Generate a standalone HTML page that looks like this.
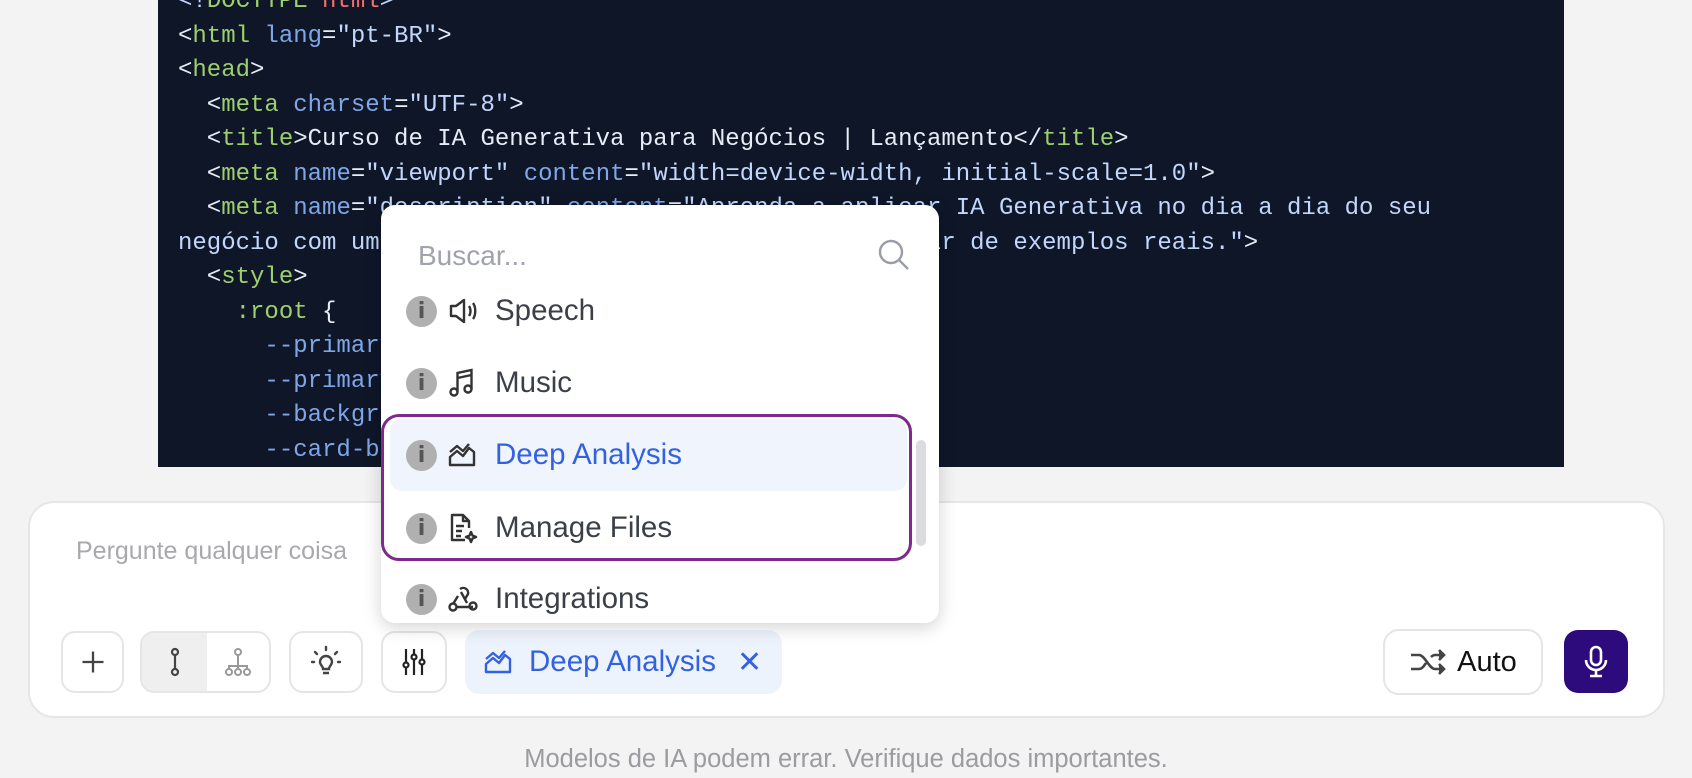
<!DOCTYPE html>
<html><head><meta charset="utf-8"><style>
*{margin:0;padding:0;box-sizing:border-box}
body{width:1692px;height:778px;background:#f3f3f3;position:relative;overflow:hidden;font-family:"Liberation Sans",sans-serif}
.code{position:absolute;left:158px;top:0;width:1406px;height:467px;background:#0e1628;overflow:hidden}
.code pre{position:absolute;left:20px;top:-15px;font-family:"Liberation Mono",monospace;font-size:24px;line-height:34.5px;color:#e6edf7;letter-spacing:0px}
.t{color:#9ecf6e}.a{color:#7fa7e8}.s{color:#c3d6fb}.r{color:#f26d6d}
.input{position:absolute;left:28px;top:501px;width:1637px;height:217px;background:#fff;border:2px solid #e6e6e6;border-radius:26px}
.ph{position:absolute;left:76px;top:537px;font-size:25px;color:#a8a8ad}
.btn{position:absolute;background:#fff;border:2px solid #e5e5e5;border-radius:14px;display:flex;align-items:center;justify-content:center}
.chip{position:absolute;left:465px;top:630px;width:317px;height:64px;background:#edf3fd;border-radius:14px;color:#3362e0;font-size:29.5px;display:flex;align-items:center}
.foot{position:absolute;left:0;width:1692px;top:745px;text-align:center;font-size:25.5px;color:#9b9ba0}
.dd{position:absolute;left:381px;top:205px;width:558px;height:418px;background:#fff;border-radius:14px;box-shadow:0 4px 18px rgba(0,0,0,.18);overflow:hidden}
.item{position:absolute;left:0;width:540px;height:72px;display:flex;align-items:center;font-size:29.5px;color:#3b3f48}
.info{position:absolute;left:25px;width:31px;height:31px;border-radius:50%;background:#b0b0b0;color:#555;font-weight:bold;font-size:22px;display:flex;align-items:center;justify-content:center;font-family:"DejaVu Sans",sans-serif}
.ic{position:absolute;left:67px}
.lbl{position:absolute;left:114px}
</style></head><body>
<div class="code"><pre><span class="s">&lt;!</span><span class="t">DOCTYPE</span> <span class="r">html</span><span class="s">&gt;</span>
&lt;<span class="t">html</span> <span class="a">lang</span>=<span class="s">"pt-BR"</span>&gt;
&lt;<span class="t">head</span>&gt;
  &lt;<span class="t">meta</span> <span class="a">charset</span>=<span class="s">"UTF-8"</span>&gt;
  &lt;<span class="t">title</span>&gt;Curso de IA Generativa para Negócios | Lançamento&lt;/<span class="t">title</span>&gt;
  &lt;<span class="t">meta</span> <span class="a">name</span>=<span class="s">"viewport"</span> <span class="a">content</span>=<span class="s">"width=device-width, initial-scale=1.0"</span>&gt;
  &lt;<span class="t">meta</span> <span class="a">name</span>=<span class="s">"description"</span> <span class="a">content</span>=<span class="s">"Aprenda a aplicar IA Generativa no dia a dia do seu</span>
<span class="s">negócio com uma abordagem prática e objetiva, a partir de exemplos reais."</span>&gt;
  &lt;<span class="t">style</span>&gt;
    <span class="t">:root</span> {
      <span class="a">--primary</span>
      <span class="a">--primary</span>
      <span class="a">--backgr</span>
      <span class="a">--card-b</span></pre></div>

<div class="input"></div>
<div class="ph">Pergunte qualquer coisa</div>

<div class="btn" style="left:61px;top:631px;width:63px;height:62px"><svg width="28" height="28" viewBox="0 0 24 24" fill="none" stroke="#444" stroke-width="2"><path d="M12 3v18M3 12h18"/></svg></div>
<div class="btn" style="left:140px;top:631px;width:131px;height:62px;justify-content:flex-start;padding:0">
 <div style="width:65px;height:58px;background:#efefef;border-radius:12px 0 0 12px;display:flex;align-items:center;justify-content:center"><svg width="24" height="30" viewBox="0 0 24 30" fill="none" stroke="#444" stroke-width="2.2"><circle cx="12" cy="5" r="3"/><circle cx="12" cy="25" r="3"/><path d="M12 8v14"/></svg></div>
 <div style="width:62px;display:flex;justify-content:center"><svg width="30" height="30" viewBox="0 0 30 30" fill="none" stroke="#999" stroke-width="2"><circle cx="15" cy="5" r="3"/><path d="M15 8v8M6 22v-3h18v3M15 16v6"/><circle cx="6" cy="25" r="3"/><circle cx="15" cy="25" r="3"/><circle cx="24" cy="25" r="3"/></svg></div>
</div>
<div class="btn" style="left:289px;top:631px;width:74px;height:62px"><svg width="32" height="34" viewBox="0 0 32 34" fill="none" stroke="#444" stroke-width="2.4"><path d="M10 17a6 6 0 1 1 12 0c0 3-3 4-3 7h-6c0-3-3-4-3-7zM13 28h6"/><path d="M16 2v3M5 7l2 2M27 7l-2 2M2 17h2M28 17h2" stroke-linecap="round"/></svg></div>
<div class="btn" style="left:381px;top:631px;width:66px;height:62px"><svg width="26" height="30" viewBox="0 0 26 30" fill="none" stroke="#222" stroke-width="2.2"><path d="M5 2v26M13 2v26M21 2v26"/><circle cx="5" cy="18" r="2.5" fill="#fff"/><circle cx="13" cy="10" r="2.5" fill="#fff"/><circle cx="21" cy="15" r="2.5" fill="#fff"/></svg></div>
<div class="chip"><svg style="position:absolute;left:19px" width="28" height="24" viewBox="0 0 28 24" fill="none" stroke="#3362e0" stroke-width="2.4" stroke-linejoin="round"><path d="M2 22V14l7-6 6 5 6-8 5 4v13H2z"/><path d="M2 9l7-6 6 5 6-7"/></svg><span style="position:absolute;left:64px">Deep Analysis</span><span style="position:absolute;left:272px;font-size:30px">✕</span></div>

<div class="btn" style="left:1383px;top:629px;width:160px;height:66px;border-radius:16px"><svg width="38" height="28" viewBox="0 0 38 28" fill="none" stroke="#444" stroke-width="2.6"><path d="M2 7h8c6 0 10 14 16 14h8M2 21h8c3 0 5-3 7-6M22 9c1-1 2-2 4-2h8"/><path d="M30 2l5 5-5 5M30 16l5 5-5 5" fill="#444"/></svg><span style="font-size:29px;color:#111;margin-left:10px">Auto</span></div>
<div style="position:absolute;left:1564px;top:630px;width:64px;height:63px;background:#2e0b7c;border-radius:14px;display:flex;align-items:center;justify-content:center"><svg width="26" height="34" viewBox="0 0 26 34" fill="none" stroke="#fff" stroke-width="2.6"><rect x="8" y="2" width="10" height="18" rx="5"/><path d="M3 15a10 10 0 0 0 20 0M13 25v6M7 31h12"/></svg></div>

<div class="foot">Modelos de IA podem errar. Verifique dados importantes.</div>

<div class="dd">
 <div style="position:absolute;left:37px;top:35px;font-size:28px;color:#a0a3ab">Buscar...</div>
 <svg style="position:absolute;left:496px;top:33px" width="34" height="34" viewBox="0 0 34 34" fill="none" stroke="#9a9da5" stroke-width="2.4"><circle cx="14" cy="14" r="11"/><path d="M22 22l9 9"/></svg>
 <div class="item" style="top:70px"><div class="info">i</div><svg class="ic" width="32" height="28" viewBox="0 0 32 28" fill="none" stroke="#333" stroke-width="2.4" stroke-linejoin="round"><path d="M3 9h5l8-6v22l-8-6H3z"/><path d="M21 9c2 3 2 7 0 10M25 6c3 4 3 12 0 16"/></svg><span class="lbl">Speech</span></div>
 <div class="item" style="top:142px"><div class="info">i</div><svg class="ic" width="28" height="30" viewBox="0 0 28 30" fill="none" stroke="#333" stroke-width="2.4"><circle cx="6" cy="24" r="3.5"/><circle cx="20" cy="21" r="3.5"/><path d="M9.5 24V5L23.5 2v19M9.5 10l14-3"/></svg><span class="lbl">Music</span></div>
 <div style="position:absolute;left:9px;top:214px;width:517px;height:72px;background:#eff4fd;border-radius:12px"></div>
 <div class="item" style="top:214px;color:#3362e0"><div class="info">i</div><svg class="ic" width="28" height="26" viewBox="0 0 28 24" fill="none" stroke="#333" stroke-width="2.4" stroke-linejoin="round"><path d="M2 22V14l7-6 6 5 6-8 5 4v13H2z"/><path d="M2 9l7-6 6 5 6-7"/></svg><span class="lbl">Deep Analysis</span></div>
 <div class="item" style="top:287px"><div class="info">i</div><svg class="ic" width="30" height="32" viewBox="0 0 30 32" fill="none" stroke="#333" stroke-width="2.4" stroke-linejoin="round"><path d="M17 28H4V3h11l6 6v7M15 3v6h6M8 14h8M8 19h6M8 24h5"/><path d="M23 20l1.5 3.5L28 25l-3.5 1.5L23 30l-1.5-3.5L18 25l3.5-1.5z"/></svg><span class="lbl">Manage Files</span></div>
 <div class="item" style="top:358px"><div class="info">i</div><svg class="ic" width="30" height="30" viewBox="0 0 30 30" fill="none" stroke="#333" stroke-width="2.4"><path d="M12 5a5 5 0 0 1 8 5l-3 5M10 12l-5 8M15 23h10"/><circle cx="5" cy="23" r="3.5"/><circle cx="25" cy="22" r="3.5"/><path d="M13 8l6 11M8 23h7"/></svg><span class="lbl">Integrations</span></div>
 <div style="position:absolute;left:535px;top:235px;width:10px;height:106px;background:#dcdce0;border-radius:5px"></div>
</div>
<div style="position:absolute;left:381px;top:414px;width:531px;height:147px;border:3px solid #7e2a8c;border-radius:18px"></div>
</body></html>
